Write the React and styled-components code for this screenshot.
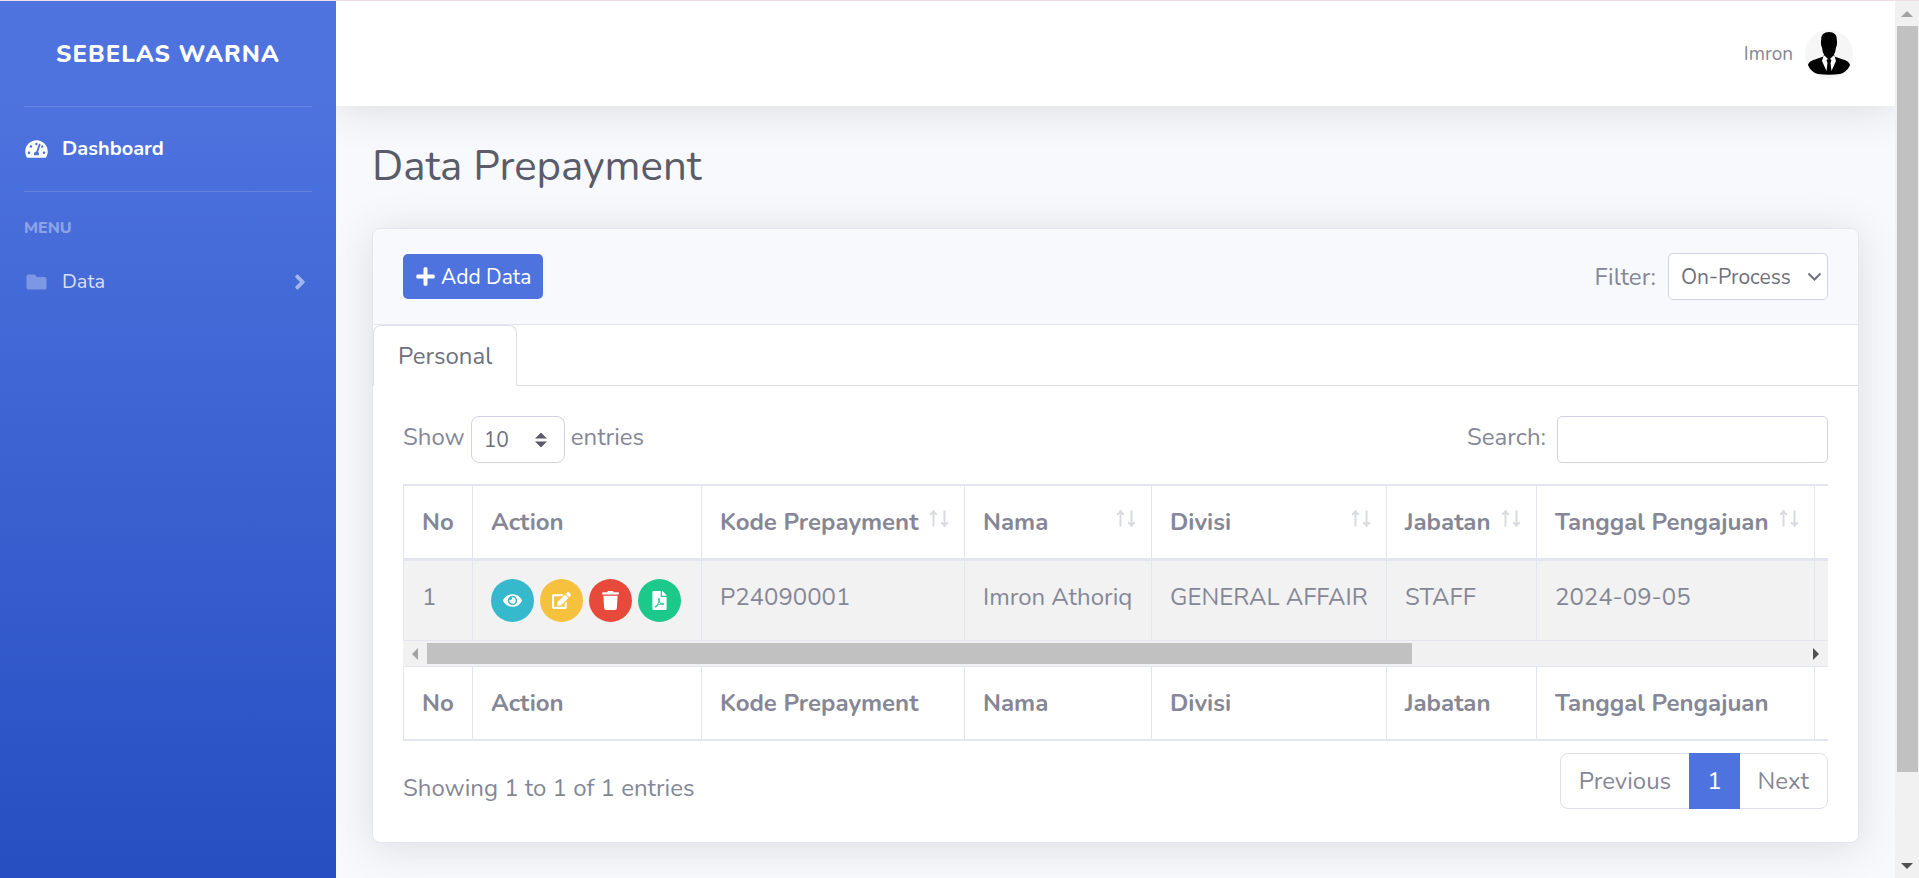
import React from 'react';
import styled, { createGlobalStyle, css } from 'styled-components';
import {
  FaTachometerAlt, FaFolder, FaAngleRight, FaPlus, FaEye, FaEdit, FaTrash, FaFilePdf,
} from 'react-icons/fa';

const GlobalStyle = createGlobalStyle`
  *, *::before, *::after { box-sizing: border-box; }
  body {
    margin: 0;
    font-family: Nunito, Lato, sans-serif;
    font-size: 24px;
    line-height: 36px;
    color: #858796;
    background: #f8f9fc;
  }
  button, input, select { font-family: inherit; margin: 0; }
  a { text-decoration: none; color: inherit; }
`;

const Frame = styled.div`
  display: grid;
  grid-template-columns: 1fr 24px;
  height: 100vh;
  overflow: hidden;
  border-top: 1px solid #eedde6;
`;

const Viewport = styled.div`
  overflow: hidden auto;
  scrollbar-width: none;
`;

const Page = styled.div`
  display: flex;
  align-items: stretch;
`;

const Sidebar = styled.nav`
  flex: 0 0 336px;
  background: linear-gradient(180deg, #4e73df 10%, #224abe 100%);
  color: #fff;
`;

const Brand = styled.a`
  display: flex;
  align-items: center;
  justify-content: center;
  height: 105px;
  font-weight: 800;
  letter-spacing: 1px;
`;

const Divider = styled.hr`
  margin: 0 24px;
  border: 0;
  border-top: 1px solid rgba(255, 255, 255, 0.15);
`;

const NavLink = styled.a`
  display: flex;
  align-items: center;
  padding: 24px;
  font-size: 20px;
  color: ${(p) => (p.$active ? '#fff' : 'rgba(255, 255, 255, 0.8)')};
  font-weight: ${(p) => (p.$active ? 700 : 400)};

  svg:first-child {
    width: 25px;
    height: 20px;
    margin-right: 13px;
    color: ${(p) => (p.$active ? '#fff' : 'rgba(255, 255, 255, 0.3)')};
  }
  svg + span { flex: 1; }
  svg:last-child { color: rgba(255, 255, 255, 0.5); }
`;

const MenuHeading = styled.div`
  padding: 24px 24px 0;
  font-size: 16px;
  line-height: 24px;
  font-weight: 800;
  color: rgba(255, 255, 255, 0.4);
`;

const Main = styled.div`
  flex: 1;
  min-width: 0;
  overflow: hidden;
`;

const Topbar = styled.header`
  display: flex;
  align-items: center;
  justify-content: flex-end;
  gap: 12px;
  height: 105px;
  padding: 0 42px;
  background: #fff;
  font-size: 19px;
  box-shadow: 0 4px 42px rgba(58, 59, 69, 0.15);
`;

const Content = styled.main`
  padding: 36px 36px 132px;
`;

const Title = styled.h1`
  margin: 0 0 36px;
  font-size: 42px;
  line-height: 50px;
  font-weight: 400;
  color: #5a5c69;
`;

const Card = styled.section`
  background: #fff;
  border: 1px solid #e3e6f0;
  border-radius: 8px;
  box-shadow: 0 4px 42px rgba(58, 59, 69, 0.15);
`;

const CardHeader = styled.div`
  display: flex;
  align-items: center;
  justify-content: space-between;
  height: 96px;
  padding: 0 30px;
  background: #f8f9fc;
  border-bottom: 1px solid #e3e6f0;
  border-radius: 8px 8px 0 0;
`;

const AddButton = styled.button`
  display: flex;
  align-items: center;
  gap: 5px;
  height: 45px;
  padding: 0 12px;
  border: 0;
  border-radius: 5px;
  background: #4e73df;
  color: #fff;
  font-size: 21px;
`;

const Field = styled.div`
  display: flex;
  align-items: ${(p) => p.$align || 'center'};
  gap: ${(p) => p.$gap}px;
`;

const controlBox = css`
  height: 47px;
  border: 1px solid #d1d3e2;
  border-radius: ${(p) => (p.$round ? 8 : 5)}px;
  background: #fff;
  color: #6e707e;
  font-size: 21px;
`;

const SelectBox = styled.div`
  position: relative;
  width: ${(p) => p.$width}px;

  svg {
    position: absolute;
    top: 50%;
    right: ${(p) => p.$inset}px;
    transform: translateY(-50%);
    pointer-events: none;
  }
`;

const Select = styled.select`
  ${controlBox}
  display: block;
  appearance: none;
  width: 100%;
  padding: 0 12px;
`;

const SearchInput = styled.input`
  ${controlBox}
  width: 271px;
  padding: 0 12px;
`;

const Tabs = styled.div`
  display: flex;
  border-bottom: 1px solid #dddfeb;
`;

const Tab = styled.button`
  height: 61px;
  margin-bottom: -1px;
  padding: 0 24px;
  border: 1px solid #dddfeb;
  border-bottom-color: #fff;
  border-radius: 8px 8px 0 0;
  background: #fff;
  color: #6e707e;
  font-size: 24px;
`;

const CardBody = styled.div`
  padding: 30px 30px 33px;
`;

const Toolbar = styled.div`
  display: flex;
  justify-content: space-between;
  line-height: 42px;
  margin-bottom: 21px;
`;

const Clip = styled.div`
  overflow: hidden;
`;

const Table = styled.table`
  width: 1991px;
  table-layout: fixed;
  border-collapse: separate;
  border-spacing: 0;
  border-left: 1px solid #e3e6f0;
  text-align: left;

  th, td {
    padding: 18px 13px 18px 18px;
    border-right: 1px solid #e3e6f0;
    vertical-align: top;
    white-space: nowrap;
  }
  thead th { border-top: 2px solid #e3e6f0; border-bottom: 3px solid #e3e6f0; }
  tbody td { height: 80px; background: #f2f2f2; border-bottom: 1px solid #e3e6f0; }
  tfoot th { border-top: 1px solid #e3e6f0; border-bottom: 2px solid #e3e6f0; }
`;

const HeadCell = styled.div`
  display: flex;
  justify-content: space-between;

  svg { margin-top: 6px; }
`;

const Actions = styled.div`
  display: flex;
  gap: 6px;
`;

const RoundButton = styled.button`
  display: grid;
  place-items: center;
  width: 43px;
  height: 43px;
  padding: 0;
  border: 0;
  border-radius: 50%;
  background: ${(p) => p.$color};
  color: #fff;
  font-size: 19px;
`;

const HScroll = styled.div`
  display: grid;
  grid-template-columns: 24px 1fr 24px;
  align-items: center;
  justify-items: center;
  height: 25px;
  background: #f1f1f1;
`;

const HThumb = styled.div`
  justify-self: start;
  width: 71.5%;
  height: 21px;
  background: #c1c1c1;
`;

const VScroll = styled.div`
  display: grid;
  grid-template-rows: 25px 1fr 25px;
  align-items: center;
  justify-items: center;
  background: #f1f1f1;
`;

const VThumb = styled.div`
  align-self: start;
  width: 21px;
  height: 90.2%;
  background: #c1c1c1;
`;

const TableFooter = styled.div`
  display: flex;
  justify-content: space-between;
  padding-top: 12px;
`;

const Info = styled.div`
  padding-top: 17px;
`;

const Pagination = styled.div`
  display: flex;
  height: 56px;
  border: 1px solid #dddfeb;
  border-radius: 8px;
`;

const PageLink = styled.a`
  display: flex;
  align-items: center;
  padding: 0 18px;
  ${(p) => p.$active && css`
    margin: -1px 0;
    background: #4e73df;
    color: #fff;
  `}
`;

const columns = [
  { label: 'No', width: 69 },
  { label: 'Action', width: 229 },
  { label: 'Kode Prepayment', width: 263, sortable: true },
  { label: 'Nama', width: 187, sortable: true },
  { label: 'Divisi', width: 235, sortable: true },
  { label: 'Jabatan', width: 150, sortable: true },
  { label: 'Tanggal Pengajuan', width: 278, sortable: true },
  { label: '' },
];

const actions = [
  { label: 'View', color: '#36b9cc', Icon: FaEye },
  { label: 'Edit', color: '#f6c23e', Icon: FaEdit },
  { label: 'Delete', color: '#e74a3b', Icon: FaTrash },
  { label: 'PDF', color: '#1cc88a', Icon: FaFilePdf },
];

const values = ['P24090001', 'Imron Athoriq', 'GENERAL AFFAIR', 'STAFF', '2024-09-05', ''];

const Columns = () => (
  <colgroup>
    {columns.map((c) => <col key={c.label} width={c.width} />)}
  </colgroup>
);

const SortIcon = () => (
  <svg width="22" height="17" viewBox="0 0 22 17" fill="none" stroke="#dadbe0" strokeWidth="2">
    <path d="M4.5 16.5V1.5M1 4.500Q3.500 3.500 4.500 1Q5.500 3.500 8 4.500" />
    <path d="M15.500 .5V15.500M12 12.500Q14.500 13.500 15.500 16Q16.500 13.500 19 12.500" />
  </svg>
);

const Avatar = () => (
  <svg width="48" height="48" viewBox="0 0 48 48" aria-label="Profile">
    <circle cx="24" cy="24" r="24" fill="#f6f6f6" />
    <path d="M24 2C19 2 16 5 16.300 9C15.600 12 16 16 17 17.500C17.500 21 18 23 19 24.500L18.500 26.500L10 29.500C5 31 3.500 33 3 35C5 40 9 43 13 44Q24 45.500 35 44C39 43 43 40 45 35C44.500 33 43 31 38 29.500L29.500 26.500L29 24.500C30 23 30.500 21 31 17.500C32 16 32.400 12 31.700 9C32 5 29 2 24 2Z" fill="#000" />
    <path d="M18.500 26L17 31L21.500 41L22.500 33L21.500 30L23 29L19.500 25.500ZM29.500 26L31 31L26.500 41L25.500 33L26.500 30L25 29L28.500 25.500Z" fill="#fff" />
  </svg>
);

const Arrow = ({ d, color }) => (
  <svg width="12" height="12" viewBox="0 0 12 12" fill={color}><path d={d} /></svg>
);

export default function App() {
  return (
    <>
      <GlobalStyle />
      <Frame>
        <Viewport>
          <Page>
            <Sidebar>
              <Brand href="#">SEBELAS WARNA</Brand>
              <Divider />
              <NavLink href="#" $active>
                <FaTachometerAlt />
                <span>Dashboard</span>
              </NavLink>
              <Divider />
              <MenuHeading>MENU</MenuHeading>
              <NavLink href="#">
                <FaFolder />
                <span>Data</span>
                <FaAngleRight size={24} />
              </NavLink>
            </Sidebar>
            <Main>
              <Topbar>
                <span>Imron</span>
                <Avatar />
              </Topbar>
              <Content>
                <Title>Data Prepayment</Title>
                <Card>
                  <CardHeader>
                    <AddButton type="button"><FaPlus />Add Data</AddButton>
                    <Field $gap={12}>
                      <label htmlFor="filter">Filter:</label>
                      <SelectBox $width={160} $inset={6}>
                        <Select id="filter" defaultValue="On-Process">
                          <option>On-Process</option>
                        </Select>
                        <svg width="15" height="10" viewBox="0 0 15 10" fill="none" stroke="#6e707e" strokeWidth="2">
                          <path d="M1.500 1.500L7.500 7.500L13.500 1.500" />
                        </svg>
                      </SelectBox>
                    </Field>
                  </CardHeader>
                  <Tabs role="tablist">
                    <Tab type="button" role="tab" aria-selected="true">Personal</Tab>
                  </Tabs>
                  <CardBody>
                    <Toolbar>
                      <Field $gap={6} $align="flex-start">
                        <label htmlFor="length">Show</label>
                        <SelectBox $width={94} $inset={18}>
                          <Select id="length" $round defaultValue="10">
                            <option>10</option>
                          </Select>
                          <svg width="12" height="15" viewBox="0 0 12 15" fill="#5a5c69">
                            <path d="M6 0L12 6H0ZM6 15L0 9H12Z" />
                          </svg>
                        </SelectBox>
                        <span>entries</span>
                      </Field>
                      <Field $gap={11} $align="flex-start">
                        <label htmlFor="search">Search:</label>
                        <SearchInput id="search" type="search" />
                      </Field>
                    </Toolbar>
                    <Clip>
                      <Table>
                        <Columns />
                        <thead>
                          <tr>
                            {columns.map((c) => (
                              <th key={c.label}>
                                <HeadCell>{c.label}{c.sortable && <SortIcon />}</HeadCell>
                              </th>
                            ))}
                          </tr>
                        </thead>
                        <tbody>
                          <tr>
                            <td>1</td>
                            <td>
                              <Actions>
                                {actions.map(({ label, color, Icon }) => (
                                  <RoundButton key={label} type="button" aria-label={label} $color={color}>
                                    <Icon />
                                  </RoundButton>
                                ))}
                              </Actions>
                            </td>
                            {values.map((v) => <td key={v}>{v}</td>)}
                          </tr>
                        </tbody>
                      </Table>
                    </Clip>
                    <HScroll>
                      <Arrow color="#a3a3a3" d="M9 0V12L3 6Z" />
                      <HThumb />
                      <Arrow color="#505050" d="M3 0V12L9 6Z" />
                    </HScroll>
                    <Clip>
                      <Table>
                        <Columns />
                        <tfoot>
                          <tr>{columns.map((c) => <th key={c.label}>{c.label}</th>)}</tr>
                        </tfoot>
                      </Table>
                    </Clip>
                    <TableFooter>
                      <Info>Showing 1 to 1 of 1 entries</Info>
                      <Pagination>
                        <PageLink href="#">Previous</PageLink>
                        <PageLink href="#" $active>1</PageLink>
                        <PageLink href="#">Next</PageLink>
                      </Pagination>
                    </TableFooter>
                  </CardBody>
                </Card>
              </Content>
            </Main>
          </Page>
        </Viewport>
        <VScroll>
          <Arrow color="#a3a3a3" d="M0 9H12L6 3Z" />
          <VThumb />
          <Arrow color="#505050" d="M0 3H12L6 9Z" />
        </VScroll>
      </Frame>
    </>
  );
}
